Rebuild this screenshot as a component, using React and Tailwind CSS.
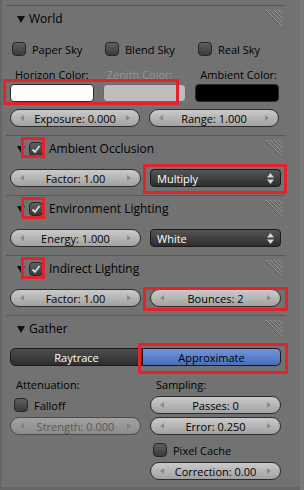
import React from "react";

const Tri = () => (
    <svg width="8" height="7" viewBox="0 0 8 7" className="shrink-0">
        <polygon points="0,0 8,0 4,7" fill="#111" />
    </svg>
);

const Hatch = () => (
    <svg width="18" height="18" viewBox="0 0 18 18" className="ml-auto mr-[3px] shrink-0">
        {[0, 1, 2, 3].map((i) => (
            <g key={i}>
                <line x1={2 + i * 4} y1="0" x2="18" y2={16 - i * 4} stroke="#9a9a9a" strokeWidth="1" />
                <line x1={2 + i * 4} y1="1" x2="17" y2={16 - i * 4} stroke="#5a5a5a" strokeWidth="1" />
            </g>
        ))}
    </svg>
);

const Check = ({ checked }) => (
    <span className="w-[14px] h-[14px] rounded-[4px] border border-[#262626] bg-gradient-to-b from-[#606060] to-[#3a3a3a] flex items-center justify-center shrink-0">
        {checked && (
            <svg width="10" height="9" viewBox="0 0 10 9">
                <path d="M1.5 4.5 L4 7 L8.5 1" fill="none" stroke="#dcdcdc" strokeWidth="1.8" />
            </svg>
        )}
    </span>
);

const ArrowL = () => (
    <svg width="4" height="6" viewBox="0 0 4 6" className="shrink-0">
        <polygon points="4,0 0,3 4,6" fill="#8a8a8a" />
    </svg>
);

const ArrowR = () => (
    <svg width="4" height="6" viewBox="0 0 4 6" className="shrink-0">
        <polygon points="0,0 4,3 0,6" fill="#8a8a8a" />
    </svg>
);

const Num = ({ label, disabled }) => (
    <div
        className={`h-[18px] rounded-full border border-[#2c2c2c] bg-gradient-to-b from-[#cacaca] to-[#a2a2a2] flex items-center px-[9px] ${
            disabled ? "opacity-55" : ""
        }`}
    >
        <ArrowL />
        <span className={`flex-1 text-center ${disabled ? "text-[#444]" : "text-black"}`}>{label}</span>
        <ArrowR />
    </div>
);

const UpDown = () => (
    <svg width="7" height="11" viewBox="0 0 7 11" className="shrink-0">
        <polygon points="0,4.5 3.5,0 7,4.5" fill="#d8d8d8" />
        <polygon points="0,6.5 3.5,11 7,6.5" fill="#d8d8d8" />
    </svg>
);

const Dropdown = ({ label }) => (
    <div className="h-[18px] rounded-[4px] border border-[#1a1a1a] bg-gradient-to-b from-[#555555] to-[#2e2e2e] flex items-center pl-[6px] pr-[6px] text-white">
        <span className="flex-1">{label}</span>
        <UpDown />
    </div>
);

const Sep = () => <div className="ml-[4px] w-[279px] h-px bg-[#585858]" />;

const Header = ({ title, checked }) => (
    <div className="h-[26px] ml-[4px] w-[279px] flex items-center pl-[11px] text-[12px]">
        <Tri />
        {checked !== undefined && (
            <span className="ml-[4px]">
                <Check checked={checked} />
            </span>
        )}
        <span className={checked !== undefined ? "ml-[6px]" : "ml-[4px]"}>{title}</span>
        <Hatch />
    </div>
);

const CheckLabel = ({ label, pad }) => (
    <div className={`flex items-center gap-[6px] ${pad}`}>
        <Check />
        <span>{label}</span>
    </div>
);

const redBoxes = [
    "left-[3px] top-[79px] w-[176px] h-[26px]",
    "left-[21px] top-[137px] w-[24px] h-[21px]",
    "left-[143px] top-[164px] w-[144px] h-[30px]",
    "left-[21px] top-[197px] w-[24px] h-[22px]",
    "left-[21px] top-[257px] w-[24px] h-[22px]",
    "left-[143px] top-[287px] w-[145px] h-[24px]",
    "left-[138px] top-[343px] w-[150px] h-[31px]",
];

const App = () => {
    return (
        <div className="relative w-[304px] h-[490px] overflow-hidden bg-[#727272] flex font-['Open_Sans',sans-serif] text-[11px] text-black leading-none">
            <div className="w-[300px] h-full border-l-2 border-b-[3px] border-[#666] pt-[5px]">
                <Sep />
                <Header title="World" />
                <div className="ml-[8px] w-[269px]">
                    <div className="mt-[9px] h-[16px] grid grid-cols-[93px_93px_1fr] items-center">
                        <CheckLabel label="Paper Sky" pad="pl-[2px]" />
                        <CheckLabel label="Blend Sky" pad="pl-[2px]" />
                        <CheckLabel label="Real Sky" pad="pl-[2px]" />
                    </div>
                    <div className="mt-[10px] h-[14px] grid grid-cols-3 gap-x-[9px] items-center">
                        <span className="pl-[5px]">Horizon Color:</span>
                        <span className="pl-[4px] text-[#959595]">Zenith Color:</span>
                        <span className="pl-[5px]">Ambient Color:</span>
                    </div>
                    <div className="mt-[3px] grid grid-cols-3 gap-x-[9px]">
                        <div className="h-[18px] rounded-[4px] border border-[#2a2a2a] bg-white" />
                        <div className="h-[18px] rounded-[4px] border border-[#6a6a6a] bg-[#bdbdbd]" />
                        <div className="h-[18px] rounded-[4px] border border-[#2a2a2a] bg-black" />
                    </div>
                    <div className="mt-[7px] grid grid-cols-2 gap-x-[9px]">
                        <Num label="Exposure: 0.000" />
                        <Num label="Range: 1.000" />
                    </div>
                    <div className="h-[8px]" />
                </div>

                <Sep />
                <Header title="Ambient Occlusion" checked />
                <div className="ml-[8px] w-[271px] mt-[7px] mb-[8px] grid grid-cols-2 gap-x-[9px]">
                    <Num label="Factor: 1.00" />
                    <Dropdown label="Multiply" />
                </div>

                <Sep />
                <Header title="Environment Lighting" checked />
                <div className="ml-[8px] w-[271px] mt-[7px] mb-[8px] grid grid-cols-2 gap-x-[9px]">
                    <Num label="Energy: 1.000" />
                    <Dropdown label="White" />
                </div>

                <Sep />
                <Header title="Indirect Lighting" checked />
                <div className="ml-[8px] w-[271px] mt-[7px] mb-[8px] grid grid-cols-2 gap-x-[9px]">
                    <Num label="Factor: 1.00" />
                    <Num label="Bounces: 2" />
                </div>

                <Sep />
                <Header title="Gather" />
                <div className="ml-[8px] w-[271px]">
                    <div className="mt-[6px] flex h-[18px]">
                        <div className="w-[133px] rounded-l-[5px] border border-[#1a1a1a] bg-gradient-to-b from-[#4e4e4e] to-[#2e2e2e] text-white flex items-center justify-center">
                            Raytrace
                        </div>
                        <div className="flex-1 rounded-r-[5px] border border-l-0 border-[#1a1a1a] bg-gradient-to-b from-[#6f95dc] to-[#4870b8] flex items-center justify-center">
                            Approximate
                        </div>
                    </div>
                    <div className="mt-[11px] h-[14px] grid grid-cols-2 gap-x-[9px] items-center">
                        <span className="pl-[6px]">Attenuation:</span>
                        <span className="pl-[6px]">Sampling:</span>
                    </div>
                    <div className="mt-[5px] grid grid-cols-2 gap-x-[9px] items-center">
                        <CheckLabel label="Falloff" pad="pl-[4px]" />
                        <Num label="Passes: 0" />
                    </div>
                    <div className="mt-[3px] grid grid-cols-2 gap-x-[9px]">
                        <Num label="Strength: 0.000" disabled />
                        <Num label="Error: 0.250" />
                    </div>
                    <div className="mt-[7px] h-[16px] grid grid-cols-2 gap-x-[9px] items-center">
                        <div />
                        <CheckLabel label="Pixel Cache" pad="pl-[3px]" />
                    </div>
                    <div className="mt-[4px] grid grid-cols-2 gap-x-[9px]">
                        <div />
                        <Num label="Correction: 0.00" />
                    </div>
                </div>
            </div>
            <div className="w-[4px] h-full bg-[#797979]" />
            {redBoxes.map((cls, i) => (
                <div key={i} className={`absolute border-[3px] border-[#e2232b] ${cls}`} />
            ))}
        </div>
    );
};

export default App;
